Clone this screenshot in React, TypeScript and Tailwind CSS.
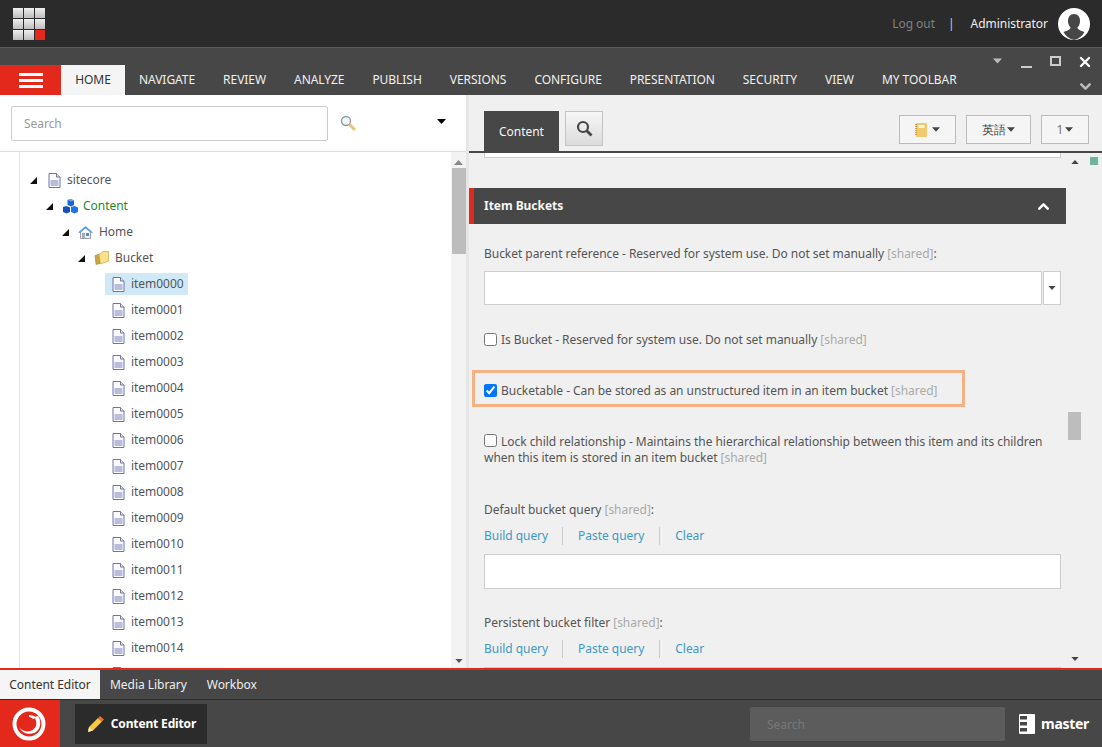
import type { ReactNode } from 'react';
import { X, ChevronDown, ChevronUp } from 'lucide-react';

const menuTabs = ['NAVIGATE', 'REVIEW', 'ANALYZE', 'PUBLISH', 'VERSIONS', 'CONFIGURE', 'PRESENTATION', 'SECURITY', 'VIEW', 'MY TOOLBAR'];
const items = Array.from({ length: 15 }, (_, i) => 'item' + String(i).padStart(4, '0'));

function DocIcon() {
  return (
    <svg width="13" height="15" viewBox="0 0 13 15" className="shrink-0">
      <path d="M1 .5h7.5L12 4v10.5H1z" fill="#fbfbfe" stroke="#6f75a0" />
      <path d="M8.5.5V4H12" fill="#e6e7f3" stroke="#6f75a0" />
      <rect x="2.5" y="7" width="8" height="6" fill="#b9bcdc" />
    </svg>
  );
}

function CubesIcon() {
  return (
    <svg width="15" height="15" viewBox="0 0 15 15" className="-ml-[1px] shrink-0">
      <path d="M4.500 1 8 0l3 1.500V6L8 7.500 4.500 6z" fill="#1c63d4" />
      <path d="M0 8l3.500-1L7 8.500V13l-3.500 1.500L0 13z" fill="#1552b8" />
      <path d="M8 8l3.500-1L15 8.500V13l-3.500 1.500L8 13z" fill="#2273e6" />
      <path d="M4.500 1 8 2.500 11 1.500 8 0z" fill="#6aa6f5" />
    </svg>
  );
}

function HomeIcon() {
  return (
    <svg width="15" height="14" viewBox="0 0 15 14" className="-ml-[2px] shrink-0">
      <path d="M2.500 7v6.500h10V7" fill="#f2f3f6" stroke="#9aa0ad" />
      <path d="M0 7.500 7.500 1 15 7.500 13 8 7.500 3.500 2 8z" fill="#5b9fe0" />
      <rect x="8" y="8" width="3" height="3" fill="#4a8fd4" />
      <rect x="4" y="8" width="3" height="5" fill="#a9adb8" />
    </svg>
  );
}

function FolderIcon() {
  return (
    <svg width="15" height="14" viewBox="0 0 15 14" className="-ml-[2px] shrink-0">
      <path d="M1 4.500 6 3v9.500L2 13.500z" fill="#c9a44a" stroke="#a98a3c" strokeWidth=".6" />
      <path d="M5 3.500 9 .5h5.500V10L6.500 13z" fill="#fbe28a" stroke="#c7a445" strokeWidth=".7" />
    </svg>
  );
}

function Triangle() {
  return (
    <svg width="7" height="7" viewBox="0 0 7 7">
      <path d="M7 0v7H0z" fill="#111" />
    </svg>
  );
}

function TreeRow({ pad, icon, label, color }: { pad: string; icon: ReactNode; label: string; color: string }) {
  return (
    <div className={'flex h-[26px] items-center ' + pad}>
      <span className="flex w-[18px] shrink-0 items-center">
        <Triangle />
      </span>
      <span className="flex w-[19px] shrink-0 items-center">{icon}</span>
      <span className={color}>{label}</span>
    </div>
  );
}

function Caret({ className = '' }: { className?: string }) {
  return (
    <svg width="9" height="5" viewBox="0 0 9 5" className={className}>
      <path d="M0 0h9L4.500 5z" fill="currentColor" />
    </svg>
  );
}

function Shared({ colon = false }: { colon?: boolean }) {
  return (
    <>
      <span className="text-[#aaa]">[shared]</span>
      {colon ? ':' : ''}
    </>
  );
}

function QueryLinks() {
  return (
    <div className="mt-[9px] flex h-[18px] items-center text-[12px] text-[#3e9ac4]">
      <span className="pr-[14px]">Build query</span>
      <span className="border-l border-[#ccc] px-[15px]">Paste query</span>
      <span className="border-l border-[#ccc] pl-[15px]">Clear</span>
    </div>
  );
}

export default function App() {
  return (
    <div className="flex h-[747px] w-[1102px] flex-col overflow-hidden font-['Open_Sans',sans-serif] text-[12px] tracking-[-0.04px] text-[#555]">
      <header className="flex h-[47px] shrink-0 items-center justify-between bg-[#2b2b2b] pl-[13px] pr-[12px]">
        <div className="grid grid-cols-[10px_10px_10px] gap-[1px]">
          {[0, 1, 2, 3, 4, 5, 6, 7].map((n) => (
            <span key={n} className="h-[10px] bg-gradient-to-b from-[#efefef] to-[#bdbdbd]" />
          ))}
          <span className="h-[10px] bg-[#e3281c]" />
        </div>
        <div className="flex items-center">
          <span className="text-[#808080]">Log out</span>
          <span className="ml-[13px] text-[#ccc]">|</span>
          <span className="ml-[16px] text-[#eee]">Administrator</span>
          <svg width="32" height="32" viewBox="0 0 32 32" className="ml-[10px]">
            <circle cx="16" cy="16" r="16" fill="#fff" />
            <path d="M16 6c4 0 6 3 6 7 0 3-1 5-2.500 6.500 0 1.500 1 2.500 7 4.500A16 16 0 0 1 16 32a16 16 0 0 1-10.500-8c6-2 7-3 7-4.500C11 18 10 16 10 13c0-4 2-7 6-7z" fill="#474747" />
          </svg>
        </div>
      </header>

      <div className="flex h-[48px] shrink-0 items-end justify-between border-t border-[#5a5a5a] bg-[#474747]">
        <nav className="flex h-[30px] items-stretch tracking-[-0.05px]">
          <div className="flex w-[61px] flex-col items-center justify-center gap-[3px] bg-[#e3281c]">
            <span className="h-[3px] w-[24px] bg-white" />
            <span className="h-[3px] w-[24px] bg-white" />
            <span className="h-[3px] w-[24px] bg-white" />
          </div>
          <span className="flex w-[64px] items-center justify-center bg-[#f5f5f5] text-[#333]">HOME</span>
          {menuTabs.map((tab) => (
            <span key={tab} className="flex items-center px-[14px] text-[#f0f0f0]">{tab}</span>
          ))}
        </nav>
        <div className="flex h-full w-[116px] flex-col pl-[7px] text-[#ccc]">
          <div className="mt-[7px] flex h-[14px] items-start">
            <Caret className="mt-[3px] h-[6px] w-[9px] text-[#bbb]" />
            <span className="ml-[19px] mt-[11px] h-[2px] w-[11px] bg-[#ccc]" />
            <span className="ml-[18px] mt-[1px] h-[10px] w-[11px] border-2 border-[#ccc]" />
            <X size={16} strokeWidth={3.5} className="ml-[16px] -mt-[1px] text-white" />
          </div>
          <ChevronDown size={17} strokeWidth={3.5} className="ml-[84px] mt-[9px] text-[#bbb]" />
        </div>
      </div>

      <main className="flex min-h-0 flex-1">
        <section className="flex w-[466px] shrink-0 flex-col bg-white">
          <div className="flex h-[57px] shrink-0 items-center border-b border-[#ddd] pl-[11px] pr-[20px]">
            <div className="flex h-[35px] w-[317px] items-center rounded-[2px] border border-[#ccc] pl-[12px] pt-[2px] text-[#999]">Search</div>
            <svg width="17" height="17" viewBox="0 0 17 17" className="ml-[12px]">
              <circle cx="6" cy="6" r="4.500" fill="#f4f6f8" stroke="#8b98a3" strokeWidth="1.300" />
              <path d="M9.500 9.500 15 15" stroke="#eec36d" strokeWidth="3" />
            </svg>
            <Caret className="ml-auto -mt-[4px] text-black" />
          </div>
          <div className="flex min-h-0 flex-1">
            <div className="ml-[19px] min-w-0 flex-1 overflow-hidden border-l border-[#e4e4e4] pt-[15px] text-[12px]">
              <TreeRow pad="pl-[10px]" icon={<DocIcon />} label="sitecore" color="text-[#555]" />
              <TreeRow pad="pl-[26px]" icon={<CubesIcon />} label="Content" color="text-[#1f8a2b]" />
              <TreeRow pad="pl-[42px]" icon={<HomeIcon />} label="Home" color="text-[#555]" />
              <TreeRow pad="pl-[58px]" icon={<FolderIcon />} label="Bucket" color="text-[#555]" />
              {items.map((item, i) => (
                <div key={item} className="flex h-[26px] items-center pl-[85px]">
                  <div className={'flex h-[22px] items-center pl-[7px] pr-[4px] ' + (i === 0 ? 'bg-[#cfe9f6]' : '')}>
                    <span className="flex w-[19px] shrink-0 items-center">
                      <DocIcon />
                    </span>
                    <span>{item}</span>
                  </div>
                </div>
              ))}
              <div className="flex h-[26px] items-center pl-[92px]">
                <DocIcon />
              </div>
            </div>
            <div className="flex w-[15px] shrink-0 flex-col items-center bg-[#f3f3f3] text-[#555]">
              <Caret className="mt-[8px] rotate-180 text-[#888]" />
              <span className="mt-[3px] h-[86px] w-[14px] bg-[#bdbdbd]" />
              <Caret className="mb-[5px] mt-auto h-[4px] w-[8px]" />
            </div>
          </div>
        </section>

        <div className="w-[3px] shrink-0 bg-[#e6e6e6]" />

        <section className="flex min-w-0 flex-1 flex-col bg-[#f0f0f0]">
          <div className="flex h-[56px] shrink-0 items-start pl-[15px] pr-[13px]">
            <span className="mt-[16px] flex h-[40px] w-[75px] items-center justify-center bg-[#474747] pt-[2px] text-[#f5f5f5]">Content</span>
            <span className="ml-[6px] mt-[16px] flex h-[35px] w-[38px] items-center justify-center border border-[#c4c4c4] bg-gradient-to-b from-[#f6f6f6] to-[#dcdcdc]">
              <svg width="17" height="17" viewBox="0 0 17 17">
                <circle cx="7" cy="7" r="5" fill="none" stroke="#474747" strokeWidth="2.200" />
                <path d="m10.500 10.500 5 5" stroke="#474747" strokeWidth="2.800" />
              </svg>
            </span>
            <span className="ml-auto mt-[20px] flex h-[29px] w-[57px] items-center justify-center gap-[4px] border border-[#bbb] bg-[#f5f5f5] text-[#444]">
              <svg width="13" height="14" viewBox="0 0 13 14">
                <rect x="1" y="0" width="11" height="14" rx="1" fill="#f2c96d" />
                <rect x="3.500" y="2" width="6" height="3" fill="#fff6dc" />
                <path d="M1 1v12" stroke="#b8862f" strokeDasharray="1 1" strokeWidth="1.500" />
              </svg>
              <Caret className="h-[5px] w-[8px]" />
            </span>
            <span className="ml-[10px] mt-[20px] flex h-[29px] w-[65px] items-center justify-center gap-[1px] border border-[#bbb] bg-[#f5f5f5] font-['Open_Sans','Noto_Sans_CJK_JP',sans-serif] text-[#444]">
              英語
              <Caret className="h-[5px] w-[8px]" />
            </span>
            <span className="ml-[10px] mt-[20px] flex h-[29px] w-[48px] items-center justify-center gap-[2px] border border-[#bbb] bg-[#f5f5f5] text-[#777]">
              1
              <Caret className="h-[5px] w-[8px] text-[#444]" />
            </span>
          </div>
          <div className="h-[2px] shrink-0 bg-[#474747]" />
          <div className="flex min-h-0 flex-1">
            <div className="w-[597px] shrink-0 overflow-hidden pl-[15px] pr-[5px]">
              <div className="h-[5px] border-x border-b border-[#ccc] bg-white" />
              <div className="mt-[30px] -ml-[15px] -mr-[5px] flex h-[36px] items-center justify-between border-l-[5px] border-[#e3281c] bg-[#474747] pl-[10px] pr-[14px] font-bold text-[#f5f5f5]">
                Item Buckets
                <ChevronUp size={17} strokeWidth={3.5} className="text-white" />
              </div>
              <p className="mt-[20px] h-[18px] leading-[20px]">
                Bucket parent reference - Reserved for system use. Do not set manually <Shared colon />
              </p>
              <div className="mt-[9px] flex h-[34px] gap-[1px]">
                <div className="flex-1 border border-[#ccc] bg-white" />
                <div className="flex w-[18px] items-center justify-center border border-[#ccc] bg-white text-[#444]">
                  <Caret className="h-[4px] w-[8px]" />
                </div>
              </div>
              <label className="mt-[25px] flex h-[18px] items-center gap-[4px] leading-[18px]">
                <input type="checkbox" readOnly className="h-[13px] w-[13px]" />
                <span className="pt-[2px]">Is Bucket - Reserved for system use. Do not set manually <Shared /></span>
              </label>
              <label className="mt-[22px] -ml-[12px] flex h-[37px] w-[493px] items-center gap-[4px] border-[3px] border-[#f4b183] pl-[9px] pt-[4px] leading-[18px]">
                <input type="checkbox" checked readOnly className="h-[13px] w-[13px]" />
                <span>Bucketable - Can be stored as an unstructured item in an item bucket <Shared /></span>
              </label>
              <p className="mt-[27px] leading-[16px]">
                <input type="checkbox" readOnly className="mr-[4px] inline-block h-[13px] w-[13px] align-[-1px]" />
                Lock child relationship - Maintains the hierarchical relationship between this item and its children
                <br />
                when this item is stored in an item bucket <Shared />
              </p>
              <p className="mt-[34px] h-[18px] leading-[20px]">Default bucket query <Shared colon /></p>
              <QueryLinks />
              <div className="mt-[9px] h-[35px] border border-[#ccc] bg-white" />
              <p className="mt-[24px] h-[18px] leading-[20px]">Persistent bucket filter <Shared colon /></p>
              <QueryLinks />
              <div className="mt-[9px] h-[35px] border border-[#ccc] bg-white" />
            </div>
            <div className="flex w-[17px] shrink-0 flex-col items-center text-[#444]">
              <Caret className="mt-[7px] h-[4px] w-[8px] rotate-180" />
              <span className="mt-[248px] h-[28px] w-[13px] bg-[#bdbdbd]" />
              <Caret className="mb-[7px] mt-auto h-[4px] w-[8px]" />
            </div>
            <div className="pl-[7px] pt-[4px]">
              <span className="block h-[8px] w-[8px] bg-[#6fb39f]" />
            </div>
          </div>
        </section>
      </main>

      <div className="flex h-[31px] shrink-0 items-stretch border-t-2 border-[#e3281c] bg-[#474747] text-[#eee]">
        <span className="flex w-[100px] items-center justify-center bg-[#f5f5f5] text-[#333]">Content Editor</span>
        <span className="ml-[10px] flex items-center">Media Library</span>
        <span className="ml-[20px] flex items-center">Workbox</span>
      </div>

      <footer className="flex h-[48px] shrink-0 items-center border-t border-[#2b2b2b] bg-[#474747]">
        <div className="flex h-full w-[60px] items-center justify-center bg-[#e3281c] pr-[2px]">
          <svg width="34" height="34" viewBox="0 0 34 34">
            <circle cx="17" cy="17" r="14.500" fill="none" stroke="#fff" strokeWidth="4" />
            <path d="M7 20c4 6 14 6 17-1 1-3 0-7-2-9l4-1c3 4 3 10 0 14-5 6-15 5-19-3z" fill="#fff" />
            <path d="M17 8c3 0 6 1 7 3l-3 1c-1-1-2-2-4-2z" fill="#fff" />
          </svg>
        </div>
        <div className="ml-[15px] flex h-[40px] w-[132px] items-center justify-center gap-[7px] bg-[#2b2b2b] pl-[2px] font-bold tracking-[-0.15px] text-white">
          <svg width="16" height="16" viewBox="0 0 16 16">
            <path d="M1 11 10 2l4 3.500-9 9L0 16z" fill="#f5c842" />
            <path d="M10 2l2-2 4 3.500-2 2z" fill="#e8702a" />
            <path d="M1 11l4 3.500L0 16z" fill="#f6e3b5" />
          </svg>
          Content Editor
        </div>
        <div className="ml-auto flex h-[34px] w-[255px] items-center rounded-[2px] bg-[#5c5c5c] pl-[17px] pt-[2px] text-[#777]">Search</div>
        <svg width="16" height="20" viewBox="0 0 16 20" className="ml-[14px]">
          <rect width="16" height="20" rx="1" fill="#fff" />
          <rect x="1" y="2" width="7" height="3.500" fill="#474747" />
          <rect x="1" y="8" width="7" height="3.500" fill="#474747" />
          <rect x="1" y="14" width="7" height="3.500" fill="#474747" />
        </svg>
        <span className="ml-[6px] mr-[13px] text-[14px] font-bold tracking-[-0.3px] text-white">master</span>
      </footer>
    </div>
  );
}
